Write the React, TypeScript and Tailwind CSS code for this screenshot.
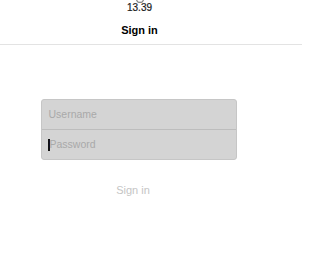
export default function App() {
  return (
    <div
      className="w-[302px] h-[266px] bg-white overflow-hidden"
      style={{ fontFamily: '"Liberation Sans", Arial, sans-serif' }}
    >
      {/* status + nav */}
      <div className="border-b border-[#e3e3e3]">
        <div className="w-[279px] flex flex-col items-center">
          <div className="h-[3px] overflow-hidden flex justify-center">
            <svg width="10" height="10" viewBox="0 0 10 10" className="-mt-[6px]">
              <circle cx="5" cy="5" r="3.5" fill="none" stroke="#8a8a8a" strokeWidth="1.3" />
            </svg>
          </div>
          <div className="text-[10px] leading-[10px] text-[#1a1a1a] font-medium h-[11px] [-webkit-text-stroke:0.2px_#1a1a1a]">
            13.39
          </div>
          <div className="h-[30px] flex items-center text-[11px] font-bold text-black pt-[2px]">Sign in</div>
        </div>
      </div>

      {/* form */}
      <div className="w-[277px] flex flex-col items-center pt-[54px]">
        <div className="w-[196px] rounded-[3px] border border-[#c6c6c6] bg-[#d4d4d4] flex flex-col">
          <div className="h-[30px] flex items-center px-[7px] text-[10.5px] text-[#a9a9a9] border-b border-[#bdbdbd]">
            Username
          </div>
          <div className="h-[29px] flex items-center px-[6px] text-[10.5px] text-[#a9a9a9]">
            <span className="w-[2px] h-[12px] bg-[#111]" />
            Password
          </div>
        </div>
        <div className="mt-[22px] -ml-[11px] text-[11px] text-[#c5c5c5]">Sign in</div>
      </div>
    </div>
  )
}
